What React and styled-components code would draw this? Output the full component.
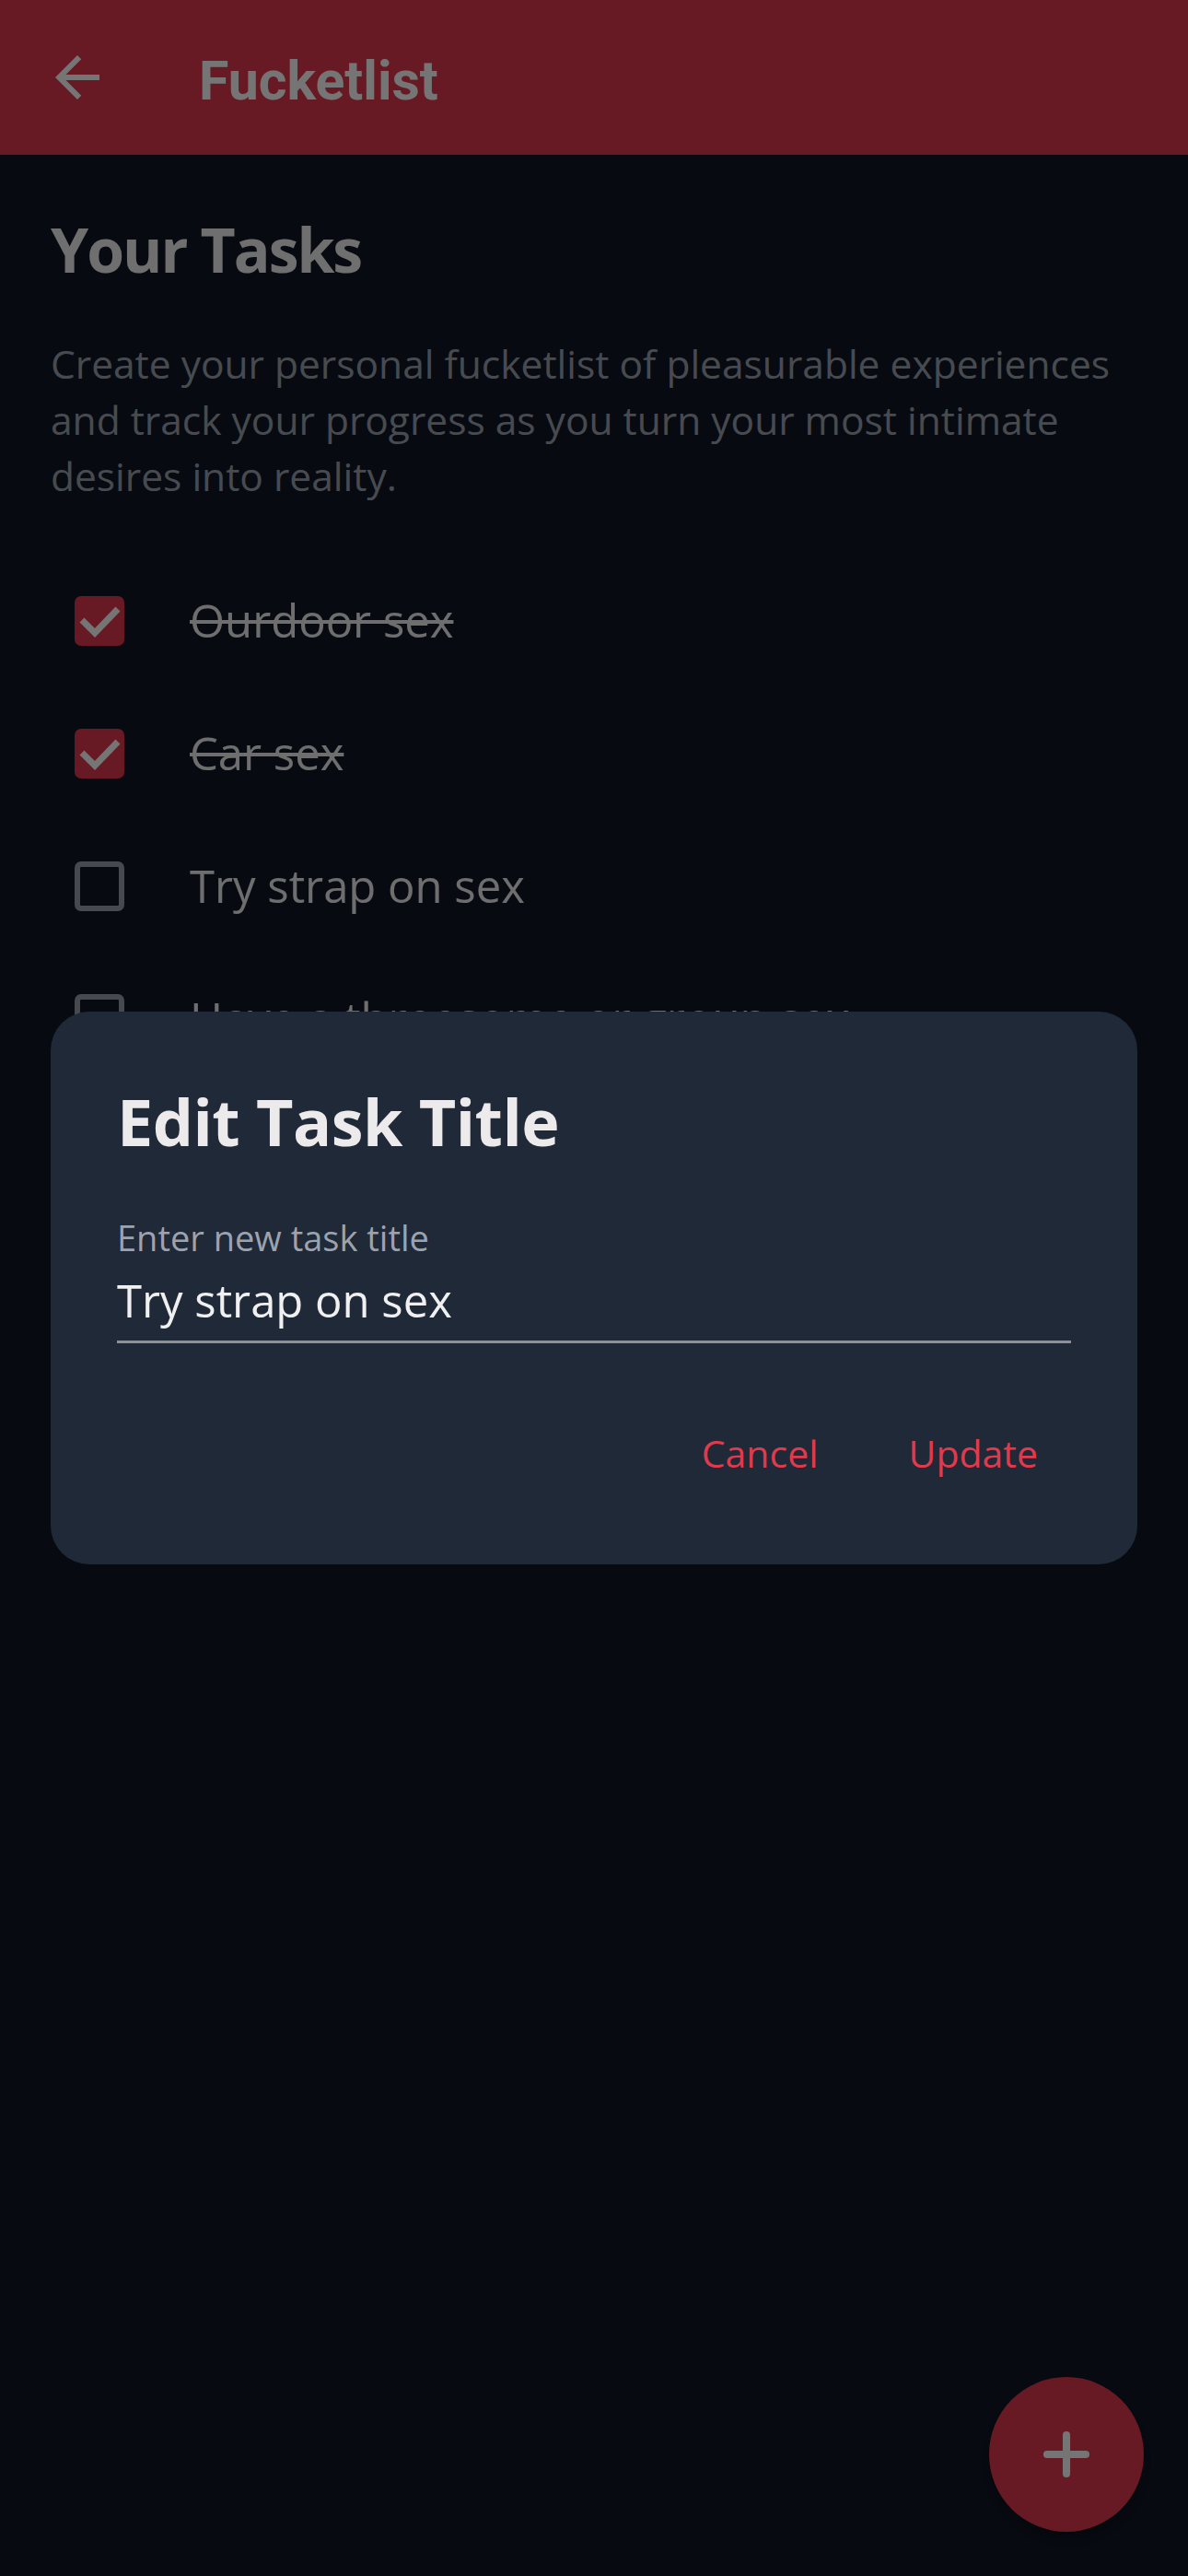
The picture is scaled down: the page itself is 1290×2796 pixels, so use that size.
import styled, { createGlobalStyle } from "styled-components";

const GlobalStyle = createGlobalStyle`
  html, body {
    margin: 0;
    padding: 0;
    background: #111827;
  }
  body {
    font-family: "Open Sans", "Noto Sans", sans-serif;
  }
  * {
    box-sizing: border-box;
  }
`;

const tasks = [
  { title: "Ourdoor sex", done: true },
  { title: "Car sex", done: true },
  { title: "Try strap on sex", done: false },
  { title: "Have a threesome or group sex", done: false },
];

const Page = styled.div`
  min-height: 100vh;
  background: #111827;
`;

const AppBar = styled.header`
  display: flex;
  align-items: center;
  height: 168px;
  background: #e03a4c;
`;

const BackButton = styled.button`
  display: flex;
  align-items: center;
  justify-content: center;
  width: 168px;
  height: 168px;
  padding: 0;
  border: none;
  background: none;
  color: #ffffff;
`;

const BarTitle = styled.h1`
  margin: 0 0 0 48px;
  padding-top: 6px;
  font-family: Roboto, "Liberation Sans", sans-serif;
  font-weight: 700;
  font-size: 59px;
  line-height: 1;
  color: #ffffff;
`;

const Content = styled.main`
  padding: 62px 55px 0;
`;

const Heading = styled.h2`
  margin: 0;
  font-size: 66px;
  font-weight: 700;
  line-height: 1.24;
  letter-spacing: -2px;
  color: #f1f1f1;
`;

const Description = styled.p`
  margin: 52px 0 0;
  font-size: 42.5px;
  line-height: 61px;
  color: #9ca3af;
`;

const TaskList = styled.ul`
  list-style: none;
  margin: 55px 0 0;
  padding: 0;
`;

const TaskRow = styled.li`
  display: flex;
  align-items: center;
  height: 144px;
  padding-left: 26px;
`;

const Box = styled.span`
  display: flex;
  align-items: center;
  justify-content: center;
  flex: none;
  width: 54px;
  height: 54px;
  border-radius: 7px;
  background: ${(p) => (p.checked ? "#e03a4c" : "transparent")};
  border: ${(p) => (p.checked ? "none" : "6px solid #9aa0aa")};
`;

const TaskText = styled.span`
  margin-left: 71px;
  font-size: 49px;
  line-height: 1.362;
  color: #efefef;
  text-decoration: ${(p) => (p.done ? "line-through" : "none")};
  text-decoration-thickness: 4px;
`;

const Fab = styled.button`
  position: fixed;
  right: 48px;
  bottom: 48px;
  z-index: 1;
  display: flex;
  align-items: center;
  justify-content: center;
  width: 168px;
  height: 168px;
  padding: 0;
  border: none;
  border-radius: 50%;
  background: #e03a4c;
  color: #ffffff;
  box-shadow: 0 9px 18px rgba(0, 0, 0, 0.35);
`;

const Scrim = styled.div`
  position: fixed;
  inset: 0;
  z-index: 10;
  display: flex;
  align-items: center;
  justify-content: center;
  padding: 0 55px;
  background: rgba(0, 0, 0, 0.54);
`;

const Dialog = styled.div`
  width: 100%;
  padding: 76px 72px 61px;
  border-radius: 42px;
  background: #1f2937;
`;

const DialogTitle = styled.h3`
  margin: 0;
  font-size: 70px;
  font-weight: 700;
  line-height: 1.234;
  letter-spacing: -0.5px;
  color: #eceaea;
`;

const FieldLabel = styled.label`
  display: block;
  margin-top: 58px;
  font-size: 38px;
  line-height: 1.326;
  color: #9ca3af;
`;

const FieldInput = styled.input`
  display: block;
  width: 100%;
  height: 80px;
  margin-top: 10px;
  padding: 0 0 12px;
  border: none;
  border-bottom: 3px solid #8e9094;
  outline: none;
  background: transparent;
  font-family: inherit;
  font-size: 49px;
  line-height: 65px;
  color: #f0f0f0;
`;

const Actions = styled.div`
  display: flex;
  justify-content: flex-end;
  gap: 26px;
  margin-top: 59px;
`;

const TextButton = styled.button`
  height: 120px;
  padding: 0 36px;
  border: none;
  background: none;
  font-family: inherit;
  font-size: 41px;
  color: #e03a4c;
`;

function ArrowBack() {
  return (
    <svg width="72" height="72" viewBox="0 0 24 24" fill="currentColor">
      <path d="M20 11H7.83l5.59-5.59L12 4l-8 8 8 8 1.41-1.41L7.83 13H20v-2z" />
    </svg>
  );
}

function Check() {
  return (
    <svg width="54" height="54" viewBox="0 0 54 54" fill="none">
      <polyline points="8,26 22,40 47,14" stroke="#ffffff" strokeWidth="7" />
    </svg>
  );
}

function PlusIcon() {
  return (
    <svg width="72" height="72" viewBox="0 0 24 24" fill="none" stroke="currentColor" strokeWidth="2.7" strokeLinecap="round">
      <path d="M12 5v14M5 12h14" />
    </svg>
  );
}

export default function App() {
  return (
    <Page>
      <GlobalStyle />
      <AppBar>
        <BackButton aria-label="Back">
          <ArrowBack />
        </BackButton>
        <BarTitle>Fucketlist</BarTitle>
      </AppBar>

      <Content>
        <Heading>Your Tasks</Heading>
        <Description>
          Create your personal fucketlist of pleasurable experiences and track your progress as you
          turn your most intimate desires into reality.
        </Description>
        <TaskList>
          {tasks.map((t) => (
            <TaskRow key={t.title}>
              <Box checked={t.done}>{t.done && <Check />}</Box>
              <TaskText done={t.done}>{t.title}</TaskText>
            </TaskRow>
          ))}
        </TaskList>
      </Content>

      <Fab aria-label="Add task">
        <PlusIcon />
      </Fab>

      <Scrim>
        <Dialog>
          <DialogTitle>Edit Task Title</DialogTitle>
          <FieldLabel htmlFor="task-title">Enter new task title</FieldLabel>
          <FieldInput id="task-title" defaultValue="Try strap on sex" />
          <Actions>
            <TextButton>Cancel</TextButton>
            <TextButton>Update</TextButton>
          </Actions>
        </Dialog>
      </Scrim>
    </Page>
  );
}
